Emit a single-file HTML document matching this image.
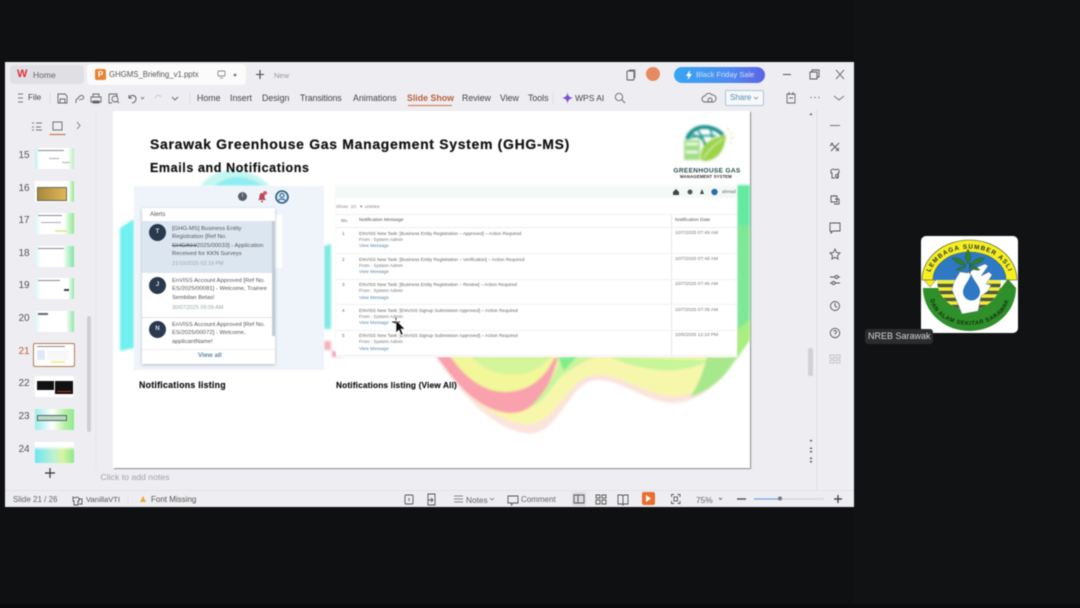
<!DOCTYPE html>
<html><head><meta charset="utf-8">
<style>
html,body{margin:0;padding:0;background:#0f1012;width:1080px;height:608px;overflow:hidden}
body{position:relative;font-family:"Liberation Sans",sans-serif}
#w{position:absolute;left:0;top:0;width:1080px;height:608px;filter:blur(.4px);overflow:hidden;background:#0f1012}
.a{position:absolute}
.t{position:absolute;white-space:nowrap;line-height:1;color:#444;font-size:9px}
svg{position:absolute;overflow:visible}
.th{position:absolute;left:35px;width:39px;height:21px;background:#fff;overflow:hidden}
.n{position:absolute;width:20px;text-align:center;left:14px;font-size:10px;color:#555;line-height:1}
.mt{position:absolute;white-space:nowrap;font-size:4.600px;line-height:1;color:#666}
.al{position:absolute;white-space:nowrap;font-size:5.900px;line-height:8.400px;color:#555;left:172px}
.bd{position:absolute;white-space:nowrap;font-weight:bold;color:#111;line-height:1;-webkit-text-stroke:.2px #111}
.tb{position:absolute;white-space:nowrap;line-height:1;color:#444;font-size:8.800px;top:94px}
</style></head>
<body><div id="w">
<div class="a" style="left:853px;top:0;width:227px;height:608px;background:#111214"></div>
<div class="a" style="left:0;top:604px;width:1080px;height:4px;background:#0a0a0a"></div>
<!-- window -->
<div class="a" style="left:5px;top:62px;width:849px;height:445px;background:#eeeef2"></div>
<div class="a" style="left:10px;top:65px;width:74px;height:19px;background:#e0e0e4;border-radius:4px"></div>
<div class="a" style="left:87px;top:64px;width:159px;height:21px;background:#fbfbfc;border-radius:4px"></div>
<div class="t" style="left:17px;top:69px;color:#d9333a;font-weight:bold;font-size:11px">W</div>
<div class="t" style="left:33px;top:71px;color:#666;font-size:8.500px">Home</div>
<div class="a" style="left:95px;top:69px;width:11px;height:11px;background:#e8822f;border-radius:2px;color:#fff;font-size:8px;line-height:11px;text-align:center;font-weight:bold">P</div>
<div class="t" style="left:109px;top:71px;color:#555;font-size:7.800px">GHGMS_Briefing_v1.pptx</div>
<div class="t" style="left:274px;top:71.500px;color:#999;font-size:7.500px">New</div>
<svg style="left:0;top:0" width="1080" height="608" fill="none" stroke="#666" stroke-width=".9">
 <rect x="218" y="71" width="7" height="5" rx="1" stroke="#888"/><path d="M220 78h3" stroke="#888"/>
 <circle cx="235" cy="75" r="1.400" fill="#777" stroke="none"/>
 <path d="M260 70v9M256 74.500h8" stroke="#444" stroke-width="1.100"/>
 <rect x="627" y="71" width="7" height="9" rx="1" stroke="#555"/><path d="M629 70h6v8" stroke="#777"/>
 <path d="M783 74.500h8M810 72h7v7h-7zM812 72v-2h7v7h-2M836 70l8 9M844 70l-8 9" stroke="#555"/>
 <!-- toolbar icons -->
 <path d="M18 94h5M18 98h5M18 102h5" stroke="#777"/>
 <path d="M58 94h7l2 2v7h-9zM60 99h5v4h-5z" stroke="#666"/>
 <path d="M76 100l4-4a2 2 0 1 1 3 3l-4 1M76 100v3" stroke="#666"/>
 <path d="M93 97v-3h6v3M91 97h10v5h-10zM93 101h6v2h-6z" stroke="#666"/>
 <path d="M109 94h8v3M109 94v9h3" stroke="#666"/><circle cx="115" cy="99" r="3" stroke="#666"/><path d="M117 101l2 2" stroke="#666"/>
 <path d="M129 98c2-4 7-3 7 1 0 2-2 4-4 4M129 95v3h3" stroke="#555"/><path d="M141 97l1.500 2 1.500-2" stroke="#777"/>
 <path d="M155 98c2-4 5-3 6-1" stroke="#c9c9cc"/>
 <path d="M172 97l3 3 3-3" stroke="#666"/>
 <path d="M50 92v12M190 92v12M553 92v12" stroke="#ddd"/>
 <circle cx="619" cy="97" r="3.700" stroke="#666"/><path d="M622 100l3 3" stroke="#666"/>
 <path d="M705 102a3 3 0 0 1 0-6 4 4 0 0 1 7-1 3.500 3.500 0 0 1 1 7z" stroke="#666"/><circle cx="710" cy="100" r="2" stroke="#666"/>
 <path d="M787 94h8v9h-8zM789 92v3M793 92v3M789 98h4" stroke="#666"/>
 <circle cx="811" cy="97.500" r=".6" fill="#555" stroke="none"/><circle cx="815" cy="97.500" r=".6" fill="#555" stroke="none"/><circle cx="819" cy="97.500" r=".6" fill="#555" stroke="none"/>
 <path d="M834 96l5 4 5-4" stroke="#777"/>
 <!-- left panel -->
 <path d="M32 123h2M36 123h6M32 127h2M36 127h5M32 130h2M36 130h6" stroke="#777"/>
 <rect x="53" y="122" width="9" height="8" stroke="#666"/>
 <path d="M49.500 134.500h16" stroke="#c9764a" stroke-width="1.200"/>
 <path d="M77 122l3 3.500-3 3.500" stroke="#777"/>
 <path d="M96 111v358" stroke="#e4e4e8"/>
 <path d="M45 473h10M50 468v10" stroke="#333" stroke-width="1.200"/>
 <!-- right panel -->
 <path d="M817 110v380" stroke="#dfdfe3"/>
 <path d="M830 125.500h10" stroke="#666"/>
 <path d="M831 143l8 8M839 143l-8 8M830 146l3-3M836 151l3-3" stroke="#555"/>
 <path d="M831 170l2-1 2 1 2-1 2 1v3h-1v5h-2M831 170v3h1v5h3" stroke="#555"/><circle cx="837" cy="176" r="1.500" stroke="#555"/>
 <path d="M831 196h6v6h-6zM834 196v-1M835 199h4v5h-5" stroke="#555"/>
 <path d="M830 223h10v8h-7l-2 2v-2h-1z" stroke="#555"/>
 <path d="M835 249l1.500 3.500 3.500.5-2.500 2.500.6 3.500-3.100-1.700-3.100 1.700.6-3.500-2.500-2.500 3.500-.5z" stroke="#555"/>
 <path d="M830 277h5M838 277h2M830 283h2M835 283h5" stroke="#555"/><circle cx="836.500" cy="277" r="1.500" stroke="#555"/><circle cx="833.500" cy="283" r="1.500" stroke="#555"/>
 <circle cx="835" cy="306" r="4.500" stroke="#555"/><path d="M835 303v3l2 1.500" stroke="#555"/>
 <circle cx="835" cy="333" r="4.700" stroke="#555"/><path d="M833.500 331.500a1.500 1.500 0 1 1 1.500 2v.8M835 336v.3" stroke="#555"/>
 <path d="M830 355h4v3h-4zM836 355h4v3h-4zM830 360h4v3h-4zM836 360h4v3h-4z" stroke="#c4c4c8"/>
 <path d="M809.500 115l1.500-2 1.500 2z M809.500 440l1.500 2 1.500-2zM809.500 449l1.500-2 1.500 2zM809.500 451l1.500 2 1.500-2zM809.500 459l1.500-2 1.500 2zM809.500 461l1.500 2 1.500-2z" fill="#555" stroke="none"/>
 <!-- status bar -->
 <path d="M5 490.500h849" stroke="#e2e2e6"/>
 <path d="M73 497l2 1 2-1 2 1v3h-1v4h-4v-4h-1zM79 499h3v5h-3" stroke="#555"/>
 <path d="M128 495v11" stroke="#e9dcdc"/>
 <path d="M143 496l3 6h-6z" fill="#e9a93a" stroke="none"/>
 <rect x="405" y="495" width="8" height="9" rx="1" stroke="#555"/><path d="M409 498v3" stroke="#555"/>
 <path d="M428 494h7v11h-7zM428 500h4M431 498l2 2-2 2" stroke="#555"/>
 <path d="M454 496h9M454 499h9M454 502h9" stroke="#888"/>
 <path d="M508 496h10v7h-5l-1.500 2v-2h-3.500z" stroke="#555"/>
 <rect x="572" y="492" width="14" height="14" rx="2" fill="#dcdce0" stroke="none"/>
 <path d="M574 495h10v8h-10zM578 495v8" stroke="#555"/>
 <path d="M596 495h4v3h-4zM602 495h4v3h-4zM596 500h4v4h-4zM602 500h4v4h-4z" stroke="#555"/>
 <path d="M618 495h4l1 1 1-1h4v9h-4l-1 1-1-1h-4zM623 496v8" stroke="#555"/>
 <path d="M671.500 497v-2.500h2.500M677.500 494.500h2.500v2.500M680 501v2.500h-2.500M674 503.500h-2.500v-2.500" stroke="#555"/><rect x="674" y="497" width="3.500" height="4" stroke="#555"/>
 <path d="M719 498l1.500 1.500 1.500-1.500" stroke="#666"/>
 <path d="M737 499h9" stroke="#444" stroke-width="1.300"/>
 <path d="M754 499h26" stroke="#6fa6dc" stroke-width="1.200"/><path d="M780 499h44" stroke="#d3d3d7" stroke-width="1.200"/>
 <circle cx="780" cy="498.500" r="2" fill="#777" stroke="none"/>
 <path d="M834 499h8M838 495v8" stroke="#333" stroke-width="1.200"/>
</svg>
<div class="a" style="left:646px;top:67px;width:14px;height:14px;background:#e68a62;border-radius:50%"></div>
<div class="a" style="left:674px;top:67px;width:91px;height:16px;border-radius:8px;background:linear-gradient(90deg,#36a6f2,#4f8cf0 60%,#5c64e4)"></div>
<svg style="left:685px;top:70px" width="8" height="10"><path d="M5 0L1 6h2.500L2.500 10 7 4H4.500z" fill="#fff"/></svg>
<div class="t" style="left:696px;top:71px;color:#cfe0f5;font-size:7.500px">Black Friday Sale</div>
<!-- toolbar text -->
<div class="t" style="left:28px;top:94px;color:#444;font-size:8.200px">File</div>
<div class="tb" style="left:197px">Home</div>
<div class="tb" style="left:230px">Insert</div>
<div class="tb" style="left:262px">Design</div>
<div class="tb" style="left:300px;letter-spacing:-.1px">Transitions</div>
<div class="tb" style="left:353px">Animations</div>
<div class="tb" style="left:407px;color:#b5653a;font-weight:bold">Slide Show</div>
<div class="a" style="left:408px;top:105px;width:44px;height:1px;background:#c9764a"></div>
<div class="tb" style="left:462px">Review</div>
<div class="tb" style="left:500px">View</div>
<div class="tb" style="left:528px">Tools</div>
<svg style="left:562px;top:92px" width="11" height="12"><path d="M5.500 0C6 4 7 5 11 6 7 7 6 8 5.500 12 5 8 4 7 0 6 4 5 5 4 5.500 0z" fill="#7c4fd6"/></svg>
<div class="tb" style="left:575px;font-size:8.500px">WPS AI</div>
<div class="a" style="left:725px;top:90px;width:37px;height:14px;border:1px solid #a9c6dc;border-radius:2px;background:#f6f8fa"></div>
<div class="t" style="left:730px;top:94px;font-size:8px;color:#5a8db0">Share</div>
<svg style="left:754px;top:96px" width="5" height="4"><path d="M0 1l2 2 2-2" stroke="#888" fill="none" stroke-width=".8"/></svg>
<!-- thumbnails -->
<div class="n" style="top:151px">15</div><div class="n" style="top:184px">16</div><div class="n" style="top:216px">17</div><div class="n" style="top:249px">18</div><div class="n" style="top:281px">19</div><div class="n" style="top:314px">20</div><div class="n" style="top:347px;color:#b5653a">21</div><div class="n" style="top:379px">22</div><div class="n" style="top:412px">23</div><div class="n" style="top:445px">24</div>
<div class="th" style="top:148px;background:linear-gradient(90deg,#bdf0ee 0,#fff 12%,#fff 85%,#b7efc1 100%)"><div class="a" style="left:3px;top:2px;width:26px;height:1px;background:#889"></div><div class="a" style="left:14px;top:10px;width:10px;height:1px;background:#aab"></div><div class="a" style="left:27px;top:14px;width:8px;height:1px;background:#9b9"></div></div>
<div class="th" style="top:181px;background:linear-gradient(90deg,#fff 85%,#8fe88f)"><div class="a" style="left:2px;top:6px;width:28px;height:12px;background:linear-gradient(90deg,#a78a3c,#e2b65a);border:1px solid #6a6a4a"></div></div>
<div class="th" style="top:213px;background:linear-gradient(90deg,#d7f5f2 0,#fff 15%,#fff 75%,#8fe88f 100%)"><div class="a" style="left:3px;top:2px;width:24px;height:1px;background:#889"></div><div class="a" style="left:6px;top:9px;width:20px;height:1px;background:#aab"></div><div class="a" style="left:20px;top:17px;width:12px;height:2px;background:#e7e79a"></div></div>
<div class="th" style="top:246px;background:linear-gradient(90deg,#d7f5f2 0,#fff 15%,#fff 72%,#7fe4a0 100%)"><div class="a" style="left:3px;top:2px;width:26px;height:1px;background:#889"></div></div>
<div class="th" style="top:278px;background:linear-gradient(90deg,#d7f5f2 0,#fff 15%,#fff 85%,#8fe8a8 100%)"><div class="a" style="left:3px;top:2px;width:22px;height:1px;background:#889"></div><div class="a" style="left:29px;top:11px;width:5px;height:2px;background:#345"></div></div>
<div class="th" style="top:311px;background:linear-gradient(90deg,#d7f5f2 0,#fff 15%,#fff 80%,#8fe8a8 100%)"><div class="a" style="left:3px;top:2px;width:10px;height:2px;background:#667"></div></div>
<div class="a" style="left:33px;top:343px;width:40px;height:22px;border:1.500px solid #b5784f;border-radius:2px;background:#fff"><div class="a" style="left:3px;top:2px;width:28px;height:1px;background:#889"></div><div class="a" style="left:3px;top:6px;width:8px;height:10px;background:#dfe9f5"></div><div class="a" style="left:13px;top:6px;width:22px;height:10px;background:#f7f7f7"></div><div class="a" style="left:17px;top:17px;width:14px;height:2px;background:#eef0a0"></div></div>
<div class="th" style="top:376px"><div class="a" style="left:2px;top:5px;width:17px;height:9px;background:#111"></div><div class="a" style="left:20px;top:5px;width:18px;height:13px;background:#111"></div><div class="a" style="left:22px;top:15px;width:14px;height:1px;background:#a33"></div></div>
<div class="th" style="top:409px;background:linear-gradient(90deg,#9cecea,#fff 45%,#b9f0a8 75%,#8fe88f)"><div class="a" style="left:2px;top:6px;width:28px;height:4px;background:#bcd8c4;border:1px solid #4a6a60"></div></div>
<div class="th" style="top:442px;background:linear-gradient(180deg,#fff 20%,transparent 40%),linear-gradient(90deg,#6fe6ee,#b8f0d8 45%,#d8f5a0 70%,#8fe88f)"></div>
<div class="a" style="left:87px;top:316px;width:4px;height:116px;background:#cfcfd3;border-radius:2px"></div>
<div class="a" style="left:808px;top:348px;width:5px;height:28px;background:#d2d2d6;border-radius:2px"></div>
<!-- slide -->
<div class="a" style="left:113px;top:111px;width:637px;height:357px;background:#fff;box-shadow:1px 1px 1px #888;overflow:hidden"></div>
<svg style="left:113px;top:111px" width="637" height="357" viewBox="113 111 637 357">
 <defs><filter id="bl1"><feGaussianBlur stdDeviation="1"/></filter></defs>
 <g filter="url(#bl1)">
 <path d="M200 186c10-12 22-16 32-16 16 0 28 6 38 16z" fill="#c6f6f0"/>
 <path d="M214 186c8-6 16-9 22-9 12 0 20 4 28 9z" fill="#8eeef0"/>
 <path d="M120 228l14-9v129l-14 3z" fill="#6ff0ee"/>
 <path d="M324 246l7-2v85h-7z" fill="#7fe9e2"/>
 <path d="M324 341h7v9h-7z" fill="#f5b3bd"/>
 <path d="M332 350l12 7h-12z" fill="#f7a5b5"/>
 <path d="M436 356c24 36 52 70 88 77 30 6 40-36 62-50 24-12 56 18 84 20 28 1 50-20 67-45V330H436z" fill="#fbe4dc"/>
 <path d="M436 356c24 32 50 60 86 68 28 5 40-32 62-46 24-12 56 14 84 18 26 3 46-16 64-40H436z" fill="#f7f7ac"/>
 <path d="M436 356c18 24 40 54 72 57 28 2 42-26 50-55z" fill="#f9a1ac"/>
 <path d="M450 356c14 20 32 36 56 36 24-1 40-14 50-38z" fill="#f2f79a"/>
 <path d="M470 356c14 14 28 20 50 18 14-1 22-8 32-18z" fill="#d4f59a"/>
 <path d="M560 357c-4 20-22 44-30 50 16-4 26-30 36-34 10-6 20-14 30-16z" fill="#c8f59e"/>
 <path d="M558 357l6 14 14-16z" fill="#7fee8a"/>
 <path d="M610 357c30 14 70 20 100 3z" fill="#c6f59a"/>
 <path d="M690 397c20-6 36-20 47-40h-30c-4 16-10 30-17 40z" fill="#a8e88c"/>
 <path d="M737 357l13-20v-152h-13z" fill="#7fe896"/>
 <path d="M737 185h13v40h-13z" fill="#63eaa0"/>
 <path d="M737 330l13-10v20l-14 20z" fill="#a8ee80"/>
 </g>
</svg>
<div class="bd" style="left:150px;top:137px;font-size:14px;letter-spacing:.68px">Sarawak Greenhouse Gas Management System (GHG-MS)</div>
<div class="bd" style="left:150px;top:161.500px;font-size:12.500px;letter-spacing:.6px">Emails and Notifications</div>
<!-- logo: local coords = page minus (660,110) -->
<svg style="left:660px;top:110px" width="90" height="72" viewBox="0 0 90 72">
 <g filter="url(#bl1)">
 <path d="M27 29c3-8 10-12 17-12 8 0 14 3 19 8" fill="none" stroke="#178f8a" stroke-width="3.800"/>
 <path d="M27 24c8 0 18 4 20 14M36 18c4 5 8 10 9 20M50 18c1 3 2 6 2 10M26 29c8-3 18-4 30-3" fill="none" stroke="#1f9588" stroke-width="1.700"/>
 <path d="M41 50c-2-14 8-22 25-25-1 14-8 26-22 26z" fill="#9bd44a"/>
 <path d="M44 48c4-8 11-14 19-19" stroke="#e6f4b8" fill="none"/>
 <rect x="24" y="30" width="16" height="20" fill="#a3de86"/>
 <path d="M26 34h12M26 42h12" stroke="#fff" stroke-width="2"/>
 <circle cx="68" cy="19" r=".9" fill="#e4c968"/><circle cx="71" cy="23" r=".9" fill="#c9d48a"/><circle cx="72" cy="28" r=".9" fill="#e4c968"/><circle cx="71" cy="33" r=".9" fill="#d4da9a"/>
 </g>
 <text x="47" y="62.500" text-anchor="middle" font-family="Liberation Sans" font-size="6.600" font-weight="bold" letter-spacing=".3" fill="#2a4a48">GREENHOUSE GAS</text>
</svg>
<div class="t" style="left:680px;top:175px;font-size:4.300px;color:#333;font-weight:bold;letter-spacing:.1px">MANAGEMENT SYSTEM</div>
<!-- left notification panel -->
<div class="a" style="left:134px;top:186px;width:190px;height:184px;background:#eff4fb"></div>
<div class="a" style="left:238px;top:192px;width:9px;height:9px;border-radius:50%;background:#55606b;color:#eef;font-size:6px;line-height:9px;text-align:center">i</div>
<svg style="left:257px;top:191px" width="12" height="12"><path d="M1 9c1-1 1.500-2 1.500-4 0-2 1.200-3 2.500-3s2.500 1 2.500 3c0 2 .5 3 1.500 4z" fill="#b44b5a"/><circle cx="5" cy="10.500" r="1" fill="#b44b5a"/><circle cx="8" cy="2" r="2" fill="#e0536c"/></svg>
<svg style="left:275px;top:190px" width="14" height="14"><circle cx="7" cy="7" r="6" fill="#dbe7f2" stroke="#2a5f86" stroke-width="1.600"/><circle cx="7" cy="5.500" r="2" fill="none" stroke="#2a5f86"/><path d="M3.500 10.500c1-2 5-2 7 0" fill="none" stroke="#2a5f86"/></svg>
<div class="a" style="left:275px;top:215px;width:7px;height:53px;background:#fff"></div>
<div class="a" style="left:142px;top:208px;width:133px;height:156px;background:#fff;box-shadow:0 1px 3px rgba(90,100,110,.4);overflow:hidden">
 <div class="a" style="left:0;top:13px;width:133px;height:52px;background:#dce6f1"></div>
 <div class="a" style="left:0;top:109px;width:133px;height:1px;background:#e4e4e8"></div>
 <div class="a" style="left:0;top:141px;width:133px;height:1px;background:#eee"></div>
 <div class="a" style="left:130px;top:13px;width:2.500px;height:115px;background:#c2ccd6"></div>
</div>
<div class="t" style="left:150px;top:211.500px;font-size:6px;color:#555">Alerts</div>
<div class="a" style="left:149px;top:224px;width:17px;height:17px;border-radius:50%;background:#2a3a4e;color:#dde;font-size:6px;line-height:17px;text-align:center;font-weight:bold">T</div>
<div class="a" style="left:149px;top:277px;width:17px;height:17px;border-radius:50%;background:#2a3a4e;color:#dde;font-size:6px;line-height:17px;text-align:center;font-weight:bold">J</div>
<div class="a" style="left:149px;top:321px;width:17px;height:17px;border-radius:50%;background:#2a3a4e;color:#dde;font-size:6px;line-height:17px;text-align:center;font-weight:bold">N</div>
<div class="al" style="top:225px">[GHG-MS] Business Entity<br>Registration [Ref No.<br><span style="text-decoration:line-through">GHG/KH/</span>2025/00033] - Application<br>Received for KKN Surveys</div>
<div class="al" style="top:260px;font-size:5.400px;color:#9aa">21/10/2025 02:19 PM</div>
<div class="al" style="top:277px">EnVISS Account Approved [Ref No.<br>ES/2025/00081] - Welcome, Trainee<br>Sembilan Belas!</div>
<div class="al" style="top:304px;font-size:5.400px;color:#9aa">30/07/2025 09:09 AM</div>
<div class="al" style="top:321px">EnVISS Account Approved [Ref No.<br>ES/2025/00072] - Welcome,<br>applicantName!</div>
<div class="t" style="left:198px;top:352.500px;font-size:6.500px;color:#5d86a8;font-weight:bold">View all</div>
<div class="bd" style="left:139px;top:381px;font-size:8.800px;letter-spacing:.25px;-webkit-text-stroke:.15px #111">Notifications listing</div>
<!-- right notification table -->
<div class="a" style="left:336px;top:185px;width:401px;height:172px;background:#fff;box-shadow:0 0 1px #ddd"></div>
<div class="a" style="left:336px;top:186px;width:401px;height:12px;background:#f3f9f7"></div>
<svg style="left:670px;top:186px" width="50" height="12"><path d="M3 6l3-3 3 3v3H3z" fill="#444"/><circle cx="20" cy="6" r="2.500" fill="#555"/><path d="M30 8l2-5 2 5z" fill="#444"/><circle cx="44.500" cy="6" r="3.200" fill="#2a6fa8"/></svg>
<div class="mt" style="left:722px;top:189.500px;font-size:4.500px">ahmad</div>
<div class="mt" style="left:336px;top:206px;font-size:4.800px;color:#888">Show &nbsp;10 &nbsp; ▾ &nbsp;entries</div>
<div class="a" style="left:336px;top:214px;width:401px;height:1px;background:#f0f0f0"></div>
<div class="a" style="left:671px;top:215px;width:1px;height:141px;background:#e8e8e8"></div>
<div class="a" style="left:336px;top:227px;width:401px;height:1px;background:#eee"></div>
<div class="a" style="left:336px;top:253px;width:401px;height:1px;background:#f2f2f2"></div>
<div class="a" style="left:336px;top:279px;width:401px;height:1px;background:#f2f2f2"></div>
<div class="a" style="left:336px;top:304px;width:401px;height:1px;background:#f2f2f2"></div>
<div class="a" style="left:336px;top:330px;width:401px;height:1px;background:#f2f2f2"></div>
<div class="a" style="left:336px;top:355px;width:401px;height:1px;background:#eee"></div>
<div class="mt" style="left:341px;top:219px">No.</div>
<div class="mt" style="left:359px;top:219px;font-size:4.800px;color:#555">Notification Message</div>
<div class="mt" style="left:675px;top:219px;font-size:4.800px;color:#555">Notification Date</div>
<div class="mt" style="left:342px;top:232px">1</div><div class="mt" style="left:359px;top:232px">ENVISS New Task: [Business Entity Registration – Approved] – Action Required</div><div class="mt" style="left:359px;top:238px;color:#777">From : System Admin</div><div class="mt" style="left:359px;top:244px;color:#5d86a8">View Message</div><div class="mt" style="left:675px;top:232px;color:#777;font-size:4.800px">10/7/2025 07:49 AM</div>
<div class="mt" style="left:342px;top:257.500px">2</div><div class="mt" style="left:359px;top:257.500px">ENVISS New Task: [Business Entity Registration – Verification] – Action Required</div><div class="mt" style="left:359px;top:263.500px;color:#777">From : System Admin</div><div class="mt" style="left:359px;top:270px;color:#5d86a8">View Message</div><div class="mt" style="left:675px;top:257.500px;color:#777;font-size:4.800px">10/7/2025 07:48 AM</div>
<div class="mt" style="left:342px;top:283px">3</div><div class="mt" style="left:359px;top:283px">ENVISS New Task: [Business Entity Registration – Review] – Action Required</div><div class="mt" style="left:359px;top:289px;color:#777">From : System Admin</div><div class="mt" style="left:359px;top:295.500px;color:#5d86a8">View Message</div><div class="mt" style="left:675px;top:283px;color:#777;font-size:4.800px">10/7/2025 07:46 AM</div>
<div class="mt" style="left:342px;top:308.500px">4</div><div class="mt" style="left:359px;top:308.500px">ENVISS New Task: [ENVISS Signup Submission Approved] – Action Required</div><div class="mt" style="left:359px;top:314.500px;color:#777">From : System Admin</div><div class="mt" style="left:359px;top:321px;color:#5d86a8">View Message</div><div class="mt" style="left:675px;top:308.500px;color:#777;font-size:4.800px">10/7/2025 07:39 AM</div>
<div class="mt" style="left:342px;top:334px">5</div><div class="mt" style="left:359px;top:334px">ENVISS New Task: [ENVISS Signup Submission Approved] – Action Required</div><div class="mt" style="left:359px;top:340px;color:#777">From : System Admin</div><div class="mt" style="left:359px;top:346.500px;color:#5d86a8">View Message</div><div class="mt" style="left:675px;top:334px;color:#777;font-size:4.800px">10/6/2025 12:10 PM</div>
<div class="bd" style="left:336px;top:380.500px;font-size:8.300px;letter-spacing:.15px;-webkit-text-stroke:.15px #111">Notifications listing (View All)</div>
<!-- cursor -->
<svg style="left:390px;top:316px" width="16" height="20"><path d="M6 5l-1 2h2zM2 6h8M6 2v5" stroke="#111" fill="none" stroke-width="1"/><path d="M6 4v13l3-3 2 5 2-1-2-5h4z" fill="#111" stroke="#fff" stroke-width=".6"/></svg>
<!-- status/notes text -->
<div class="t" style="left:100.500px;top:473px;font-size:8.700px;color:#a2a2a6">Click to add notes</div>
<div class="t" style="left:13px;top:495.500px;font-size:8px;color:#666">Slide 21 / 26</div>
<div class="t" style="left:86px;top:495.500px;font-size:7.600px;color:#555">VanillaVTI</div>
<div class="t" style="left:151px;top:495.500px;font-size:8px;color:#555">Font Missing</div>
<div class="t" style="left:466px;top:495.500px;font-size:8.300px;color:#666">Notes</div>
<svg style="left:490px;top:497px" width="5" height="4"><path d="M0 1l2 2 2-2" stroke="#777" fill="none" stroke-width=".8"/></svg>
<div class="t" style="left:521px;top:495.500px;font-size:8px;color:#666">Comment</div>
<div class="a" style="left:642px;top:492px;width:13px;height:13px;background:#e8702e;border-radius:2px"></div>
<svg style="left:645px;top:495px" width="7" height="7"><path d="M1 0l5 3.500-5 3.500z" fill="#fff"/></svg>
<div class="t" style="left:696px;top:495.500px;font-size:8.300px;color:#666">75%</div>
<!-- right logo -->
<svg style="left:921px;top:236px" width="97" height="97" viewBox="0 0 97 97">
 <defs><clipPath id="rr"><rect width="97" height="97" rx="5"/></clipPath>
 <clipPath id="st"><ellipse cx="48" cy="44" rx="32" ry="30"/></clipPath>
 <path id="tp" d="M8 44A40 31 0 0 1 89 44"/><path id="bp" d="M9 60A39.500 29 0 0 0 88 60"/></defs>
 <rect width="97" height="97" rx="5" fill="#fff"/>
 <g clip-path="url(#rr)">
 <path d="M1 44A47.500 40 0 0 1 96 44H85A36.500 28 0 0 0 12 44z" fill="#f6ee1f" stroke="#3a4a20" stroke-width=".6"/>
 <path d="M12 44A36.500 28 0 0 1 85 44z" fill="#2e78c4"/>
 <path d="M3 44l6 7 6-7z" fill="#f6ee1f" stroke="#555" stroke-width=".5"/>
 <path d="M80 52l7-9 8 9z" fill="#2f8a2a"/>
 <path d="M2 52H95A46.500 43 0 0 1 2 52z" fill="#2f8f2a"/>
 <g clip-path="url(#st)">
 <rect x="16" y="44" width="64" height="30" fill="#fff"/>
 <path d="M16 46h64M16 53h64M16 60h64M16 67h64" stroke="#f3ec2d" stroke-width="3.500"/>
 <path d="M16 49.500h64M16 56.500h64M16 63.500h64M16 70.500h64" stroke="#4c5a3a" stroke-width="3.500"/>
 </g>
 <path d="M33 46l6-10 8 1 10-6 7-3 3 2-7 10 8-4 3 3-6 9 5 1-3 6-7 5-3 15-16 3-4-10-6-14z" fill="#fff" stroke="#777" stroke-width=".4"/>
 <path d="M50 38c3 7 9 12 9 18a8.500 8.500 0 0 1-17 0c0-6 6-11 8-18z" fill="#2e78c4"/>
 <path d="M49 38V27" stroke="#2d5a20"/>
 <path d="M47 28c-4-5-3-10 0-15 3 5 4 10 0 15zM45 29c-5 0-11-2-14-7 6-1 11 2 14 7zM49 29c5 0 11-2 15-7-6-1-12 2-15 7zM45 30c-3 0-7 1-10 4 4 1 8-1 10-4zM49 30c3 0 7 1 10 4-4 1-8-1-10-4z" fill="#2f7f2c" stroke="#204a1a" stroke-width=".3"/>
 </g>
 <text font-family="Liberation Sans" font-size="6.300" font-weight="bold" fill="#234" letter-spacing="1.100" text-anchor="middle"><textPath href="#tp" startOffset="50%">LEMBAGA SUMBER ASLI</textPath></text>
 <text font-family="Liberation Sans" font-size="5.800" font-weight="bold" fill="#12300f" letter-spacing=".5" text-anchor="middle"><textPath href="#bp" startOffset="50%">DAN ALAM SEKITAR SARAWAK</textPath></text>
</svg>
<div class="a" style="left:865px;top:329px;width:68px;height:15px;background:#2b2c2e;border-radius:3px"></div>
<div class="t" style="left:868px;top:332px;font-size:9px;color:#d6d6d8">NREB Sarawak</div>
</div></body></html>
